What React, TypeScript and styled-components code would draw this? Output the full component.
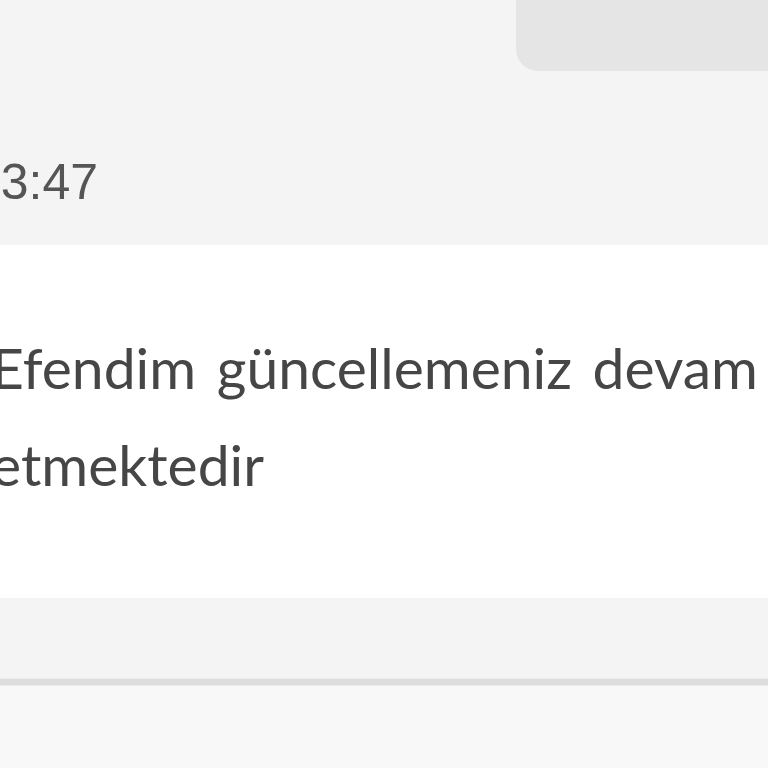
import React from 'react'
import styled, { createGlobalStyle } from 'styled-components'

const GlobalStyle = createGlobalStyle`
  html, body {
    margin: 0;
    padding: 0;
    background: #f8f8f8;
  }
  body {
    overflow: hidden;
  }
`

const Screen = styled.div`
  width: 768px;
  height: 768px;
  display: flex;
  flex-direction: column;
  overflow: hidden;
  background: #f8f8f8;
`

const Thread = styled.div`
  display: flex;
  flex-direction: column;
  background: #f4f4f4;
`

const OutgoingRow = styled.div`
  display: flex;
  justify-content: flex-end;
  height: 74px;
`

const OutgoingBubble = styled.div`
  width: 252px;
  height: 71px;
  background: #e5e5e5;
  border-bottom-left-radius: 22px;
`

const Stamp = styled.div`
  height: 171px;
  box-sizing: border-box;
  padding-top: 83px;
  margin-left: -27px;
  font-family: 'Liberation Sans', Arial, sans-serif;
  font-size: 50px;
  line-height: 1;
  color: #555555;
  white-space: nowrap;
`

const IncomingCard = styled.div`
  background: #ffffff;
  height: 353px;
  box-sizing: border-box;
  padding-top: 74px;
  margin-left: -9px;
  font-family: Lato, 'Open Sans', sans-serif;
  font-size: 57px;
  line-height: 97px;
  word-spacing: 6px;
  color: #464646;
  white-space: nowrap;
`

const Spacer = styled.div`
  height: 80px;
  background: #f4f4f4;
`

const Divider = styled.div`
  height: 6px;
  background: #dddddd;
  border-top: 1px solid #ececec;
  border-bottom: 1px solid #ececec;
`

const Composer = styled.div`
  flex: 1;
  background: #f8f8f8;
`

export default function App() {
  return (
    <>
      <GlobalStyle />
      <Screen>
        <Thread>
          <OutgoingRow>
            <OutgoingBubble />
          </OutgoingRow>
          <Stamp>13:47</Stamp>
        </Thread>
        <IncomingCard>
          Efendim güncellemeniz devam
          <br />
          etmektedir
        </IncomingCard>
        <Spacer />
        <Divider />
        <Composer />
      </Screen>
    </>
  )
}
